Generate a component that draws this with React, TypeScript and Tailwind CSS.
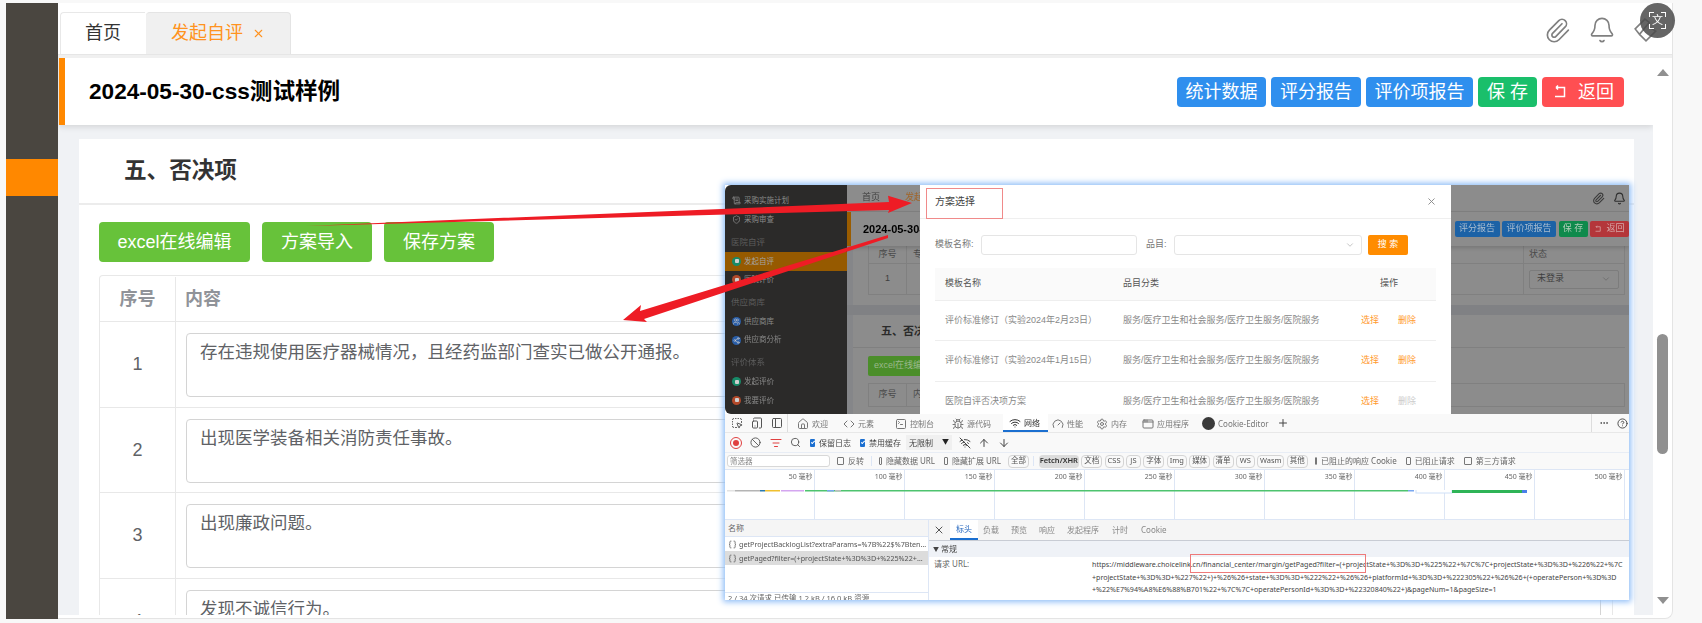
import {
  Bell, Paperclip, ChevronDown, X, Home, Code, Wifi, Gauge, Settings, Plus, AppWindow, Search, Ban, ListFilter,
  ArrowUp, ArrowDown, CircleHelp, Ellipsis, Bug, SquareTerminal, MousePointerSquareDashed, TabletSmartphone, PanelLeft,
  WifiOff, Braces, ScrollText, ShieldCheck, Users, Share2,
} from "lucide-react";

const FONT = "font-['Liberation_Sans','Noto_Sans_CJK_SC',sans-serif]";
const DEV_FONT = "font-['Noto_Sans','Noto_Sans_CJK_SC',sans-serif]";

const rows = [
  { n: 1, h: "h-[86px]", text: "存在违规使用医疗器械情况，且经药监部门查实已做公开通报。" },
  { n: 2, h: "h-[85px]", text: "出现医学装备相关消防责任事故。" },
  { n: 3, h: "h-[86px]", text: "出现廉政问题。" },
  { n: 4, h: "h-[86px]", text: "发现不诚信行为。" },
];

function TopBtn({ label, className }: { label: React.ReactNode; className: string }) {
  return (
    <button className={`h-[30px] rounded-[4px] text-white text-[18px] leading-[30px] flex items-center justify-center ${className}`}>
      {label}
    </button>
  );
}

function ReturnGlyph({ className }: { className: string }) {
  return (
    <svg viewBox="0 0 16 16" className={className} fill="none" stroke="currentColor" strokeWidth="1.5">
      <path d="M4 3.5h8.5v9H3M4 3.5l2-2M4 3.5l2 2" />
    </svg>
  );
}

function MiniNav({ icon, color, label, active }: { icon: React.ReactNode; color: string; label: string; active?: boolean }) {
  return (
    <div className={`flex items-center h-[18.6px] pl-[7px] gap-[3px] text-[7.5px] whitespace-nowrap ${active ? "bg-[#965a00] text-[#a5a5a5]" : "text-[#8a8a8a]"}`}>
      <span className={`w-[9px] h-[9px] rounded-full flex items-center justify-center ${color}`}>{icon}</span>
      {label}
    </div>
  );
}

function MiniHead({ label }: { label: string }) {
  return <div className="h-[23px] pl-[6px] pt-[3px] flex items-center text-[8.5px] text-[#5c5c5c]">{label}</div>;
}

function Sidebar() {
  const dot = <span className="w-[4px] h-[4px] bg-[#cfcfcf] rounded-[1px]" />;
  return (
    <div className={`w-[122px] h-full bg-[#2b2a29] rounded-l-[6px] pt-[6px] shrink-0 ${FONT}`}>
      <div className="flex items-center h-[19px] pl-[7px] gap-[3px] text-[7.5px] text-[#8a8a8a]">
        <ScrollText className="w-[9px] h-[9px]" />采购实施计划
      </div>
      <div className="flex items-center h-[19px] pl-[7px] gap-[3px] text-[7.5px] text-[#8a8a8a]">
        <ShieldCheck className="w-[9px] h-[9px]" />采购审查
      </div>
      <MiniHead label="医院自评" />
      <MiniNav icon={dot} color="bg-[#178a68]" label="发起自评" active />
      <MiniNav icon={dot} color="bg-[#b2492a]" label="医院评价" />
      <MiniHead label="供应商库" />
      <MiniNav icon={<Users className="w-[7px] h-[7px] text-[#cfcfcf]" />} color="bg-[#2a5ea8]" label="供应商库" />
      <MiniNav icon={<Share2 className="w-[7px] h-[7px] text-[#cfcfcf]" />} color="bg-[#2a5ea8]" label="供应商分析" />
      <MiniHead label="评价体系" />
      <MiniNav icon={dot} color="bg-[#178a68]" label="发起评价" />
      <MiniNav icon={dot} color="bg-[#b2492a]" label="我要评价" />
    </div>
  );
}

// page behind the dialog mask, dimmed
function DimmedPage() {
  return (
    <div className={`flex-1 h-full bg-[#8c8c8c] overflow-hidden text-[#3e3e3e] whitespace-nowrap ${FONT}`}>
      <div className="h-[27px] flex items-center border-b border-[#808080] pl-[15px] text-[9px] relative">
        <span>首页</span>
        <span className="ml-[25px] text-[#a0652a]">发起</span>
        <Paperclip className="absolute left-[745px] top-[7px] w-[13px] h-[13px] text-[#3a3a3a]" />
        <Bell className="absolute left-[766px] top-[7px] w-[13px] h-[13px] text-[#2e2e2e]" />
      </div>
      <div className="h-[34px] border-l-[4px] border-[#9a5c00] flex items-center justify-between pl-[12px] text-[11px] font-bold text-black shadow-[0_2px_4px_rgba(0,0,0,0.15)] relative">
        <span>2024-05-30-css测试样例</span>
        <div className="flex gap-[2.5px] text-[9px] font-normal text-[#a8bcd0]">
          <span className="w-[45px] h-[16px] rounded-[2px] bg-[#1c62a6] flex items-center justify-center">评分报告</span>
          <span className="w-[54px] h-[16px] rounded-[2px] bg-[#1c62a6] flex items-center justify-center">评价项报告</span>
          <span className="w-[29px] h-[16px] rounded-[2px] bg-[#0f8a4c] flex items-center justify-center text-[#b0ccb8]">保 存</span>
          <span className="w-[39px] h-[16px] rounded-[2px] bg-[#b4363a] flex items-center justify-center gap-[4px] text-[#d8a8a8]">
            <ReturnGlyph className="w-[8px] h-[8px]" />返回
          </span>
        </div>
      </div>
      <div className="h-[59px] bg-[#858689] pl-[6px]">
        <div className="h-full bg-[#8c8c8c] pl-[15px] pr-[4px]">
          <div className="h-[49px] border-x border-b border-[#808080] flex text-[9px]">
            <div className="w-[38px] border-r border-[#808080] flex flex-col">
              <div className="h-[18px] flex items-center justify-center border-b border-[#808080] text-[#4a4a4a]">序号</div>
              <div className="flex-1 flex items-center justify-center">1</div>
            </div>
            <div className="flex-1 flex flex-col">
              <div className="h-[18px] pl-[6px] flex items-center border-b border-[#808080] text-[#4a4a4a]">专</div>
            </div>
            <div className="w-[101px] border-l border-[#808080] flex flex-col">
              <div className="h-[18px] pl-[5px] flex items-center border-b border-[#808080] text-[#4a4a4a]">状态</div>
              <div className="flex-1 flex items-center pl-[5px]">
                <div className="w-[90px] h-[19px] border border-[#7c7c7c] rounded-[2px] flex items-center justify-between px-[7px] text-[#3e3e3e]">
                  未登录<ChevronDown className="w-[10px] h-[10px] text-[#6c6c6c]" />
                </div>
              </div>
            </div>
          </div>
        </div>
      </div>
      <div className="h-[10px] bg-[#808184]" />
      <div className="h-[99px] bg-[#858689] pl-[6px]">
        <div className="h-full bg-[#8c8c8c] pr-[4px]">
          <div className="h-[33px] border-b border-[#808080] pl-[28px] flex items-center text-[11px] font-bold text-[#2a2a2a]">五、否决项</div>
          <div className="pl-[15px] pt-[8px]">
            <div className="w-[90px] h-[20px] rounded-[2px] bg-[#4b8e2a] text-[#9ab88a] text-[9px] flex items-center pl-[6px]">excel在线编辑</div>
          </div>
          <div className="ml-[15px] mt-[7px] h-[24px] border border-[#808080] flex text-[9px] text-[#4a4a4a]">
            <div className="w-[38px] border-r border-[#808080] flex items-center justify-center">序号</div>
            <div className="pl-[6px] flex items-center">内容</div>
          </div>
        </div>
      </div>
    </div>
  );
}

function SchemeDialog() {
  const data = [
    { name: "评价标准修订（实验2024年2月23日）", h: "h-[40px]", off: false },
    { name: "评价标准修订（实验2024年1月15日）", h: "h-[41px]", off: false },
    { name: "医院自评否决项方案", h: "h-[41px]", off: true },
  ];
  return (
    <div className={`absolute left-[195px] top-0 w-[531px] h-[229px] bg-white overflow-hidden text-[9px] whitespace-nowrap ${FONT}`}>
      <div className="h-[34px] border-b border-[#efefef] flex items-center justify-between pl-[15px] pr-[14px]">
        <span className="text-[10px] text-[#444]">方案选择</span>
        <X className="w-[11px] h-[11px] text-[#888]" />
      </div>
      <div className="flex items-center h-[21px] mt-[15px] pl-[15px] text-[#777]">
        <span className="w-[46px]">模板名称:</span>
        <div className="w-[156px] h-[20px] border border-[#e5e5e5] rounded-[3px]" />
        <span className="ml-[9px] w-[28px]">品目:</span>
        <div className="w-[188px] h-[20px] border border-[#e5e5e5] rounded-[3px] flex items-center justify-end pr-[6px]">
          <ChevronDown className="w-[10px] h-[10px] text-[#bbb]" />
        </div>
        <div className="ml-[6px] w-[40px] h-[20px] bg-[#ff8c00] rounded-[2px] text-white flex items-center justify-center">搜 索</div>
      </div>
      <div className="ml-[15px] mr-[15px] mt-[13px]">
        <div className="h-[33px] bg-[#fafafa] border-b border-[#eee] flex items-center text-[#555]">
          <span className="w-[188px] pl-[10px]">模板名称</span>
          <span className="w-[238px]">品目分类</span>
          <span className="pl-[19px]">操作</span>
        </div>
        {data.map((d) => (
          <div key={d.name} className={`${d.h} border-b border-[#eee] flex items-center text-[#888]`}>
            <span className="w-[188px] pl-[10px]">{d.name}</span>
            <span className="w-[238px]">服务/医疗卫生和社会服务/医疗卫生服务/医院服务</span>
            <span className="w-[37px] text-[#ff9a2e]">选择</span>
            <span className={d.off ? "text-[#ccc]" : "text-[#ff9a2e]"}>删除</span>
          </div>
        ))}
      </div>
      <div className="absolute left-[6px] top-[3px] w-[77px] h-[31px] border border-[#f08a8a]" />
    </div>
  );
}

function DevTab({ icon, label, active, className }: { icon: React.ReactNode; label: string; active?: boolean; className: string }) {
  return (
    <div className={`h-full flex items-center gap-[3px] shrink-0 pt-[1px] ${active ? "border-b-[2px] border-[#1b6fd0] text-[#333] bg-white" : "text-[#777]"} ${className}`}>
      {icon}
      <span>{label}</span>
    </div>
  );
}

function Check({ on, label, className }: { on?: boolean; label: string; className: string }) {
  return (
    <div className={`flex items-center gap-[4px] shrink-0 ${className}`}>
      <span className={`w-[8px] h-[8px] rounded-[1px] flex items-center justify-center ${on ? "bg-[#1b6fd0]" : "border border-[#777]"}`}>
        {on && <span className="w-[4px] h-[2px] border-l border-b border-white -rotate-45 -mt-[1px]" />}
      </span>
      {label}
    </div>
  );
}

function Chip({ label, active, w }: { label: string; active?: boolean; w: string }) {
  return (
    <span className={`h-[13px] rounded-[4px] flex items-center justify-center text-[7.5px] shrink-0 ${w} ${active ? "bg-[#dcdcdc] text-[#333] font-semibold" : "border border-[#d4d4d4] text-[#555]"}`}>
      {label}
    </span>
  );
}

function DevTools() {
  const ic = "w-[12px] h-[12px]";
  const marks = [50, 100, 150, 200, 250, 300, 350, 400, 450, 500];
  return (
    <div className={`absolute left-0 top-[229px] w-[904px] h-[186px] bg-white overflow-hidden text-[8px] whitespace-nowrap text-[#666] ${DEV_FONT}`}>
      {/* tabs */}
      <div className="h-[19px] bg-[#f9f9f9] border-b border-[#e8e8e8] flex items-center relative">
        <div className="flex items-center gap-[8px] pl-[6px] w-[62px] text-[#555] shrink-0">
          <MousePointerSquareDashed className={ic} />
          <TabletSmartphone className={ic} />
          <PanelLeft className={ic} />
        </div>
        <div className="w-px h-full bg-[#ddd]" />
        <DevTab icon={<Home className={ic} />} label="欢迎" className="ml-[9px] w-[42px]" />
        <DevTab icon={<Code className={ic} />} label="元素" className="ml-[4px] w-[46px]" />
        <DevTab icon={<SquareTerminal className={ic} />} label="控制台" className="ml-[6px] w-[55px]" />
        <DevTab icon={<Bug className={ic} />} label="源代码" className="ml-[2px] w-[51px]" />
        <DevTab icon={<Wifi className={ic} />} label="网络" active className="w-[45px] pl-[6px]" />
        <DevTab icon={<Gauge className={ic} />} label="性能" className="ml-[4px] w-[41px]" />
        <DevTab icon={<Settings className={ic} />} label="内存" className="ml-[3px] w-[46px]" />
        <DevTab icon={<AppWindow className={ic} />} label="应用程序" className="w-[58px]" />
        <DevTab icon={<span className="w-[13px] h-[13px] rounded-full bg-[#3a3a3a]" />} label="Cookie-Editor" className="ml-[2px] w-[75px]" />
        <Plus className={`${ic} text-[#444]`} />
        <div className="absolute right-0 top-0 h-full w-[38px] border-l border-[#ddd] flex items-center gap-[8px] pl-[7px] text-[#444]">
          <Ellipsis className="w-[10px] h-[10px]" />
          <CircleHelp className="w-[11px] h-[11px]" />
        </div>
      </div>
      {/* toolbar */}
      <div className="h-[20px] bg-[#f9f9f9] border-b border-[#e8edf5] flex items-center pl-[5px] text-[#444]">
        <span className="w-[12px] h-[12px] rounded-full border border-[#e04040] flex items-center justify-center shrink-0">
          <span className="w-[6px] h-[6px] rounded-full bg-[#e04040]" />
        </span>
        <Ban className="ml-[8px] w-[11px] h-[11px] text-[#555]" />
        <ListFilter className="ml-[9px] w-[12px] h-[12px] text-[#e04040]" />
        <Search className="ml-[8px] w-[11px] h-[11px] text-[#555]" />
        <Check on label="保留日志" className="ml-[9px] w-[41px]" />
        <Check on label="禁用缓存" className="ml-[9px] w-[41px]" />
        <span className="ml-[5px] w-[46px] h-[15px] bg-[#f0f0f0] flex items-center justify-between px-[3px]">
          无限制<span className="text-[7px] text-[#222]">▼</span>
        </span>
        <WifiOff className="ml-[7px] w-[12px] h-[12px]" />
        <ArrowUp className="ml-[7px] w-[12px] h-[12px]" />
        <ArrowDown className="ml-[8px] w-[12px] h-[12px]" />
      </div>
      {/* filter row */}
      <div className="h-[17px] bg-[#f9f9f9] border-b border-[#dde6f5] flex items-center pl-[2px]">
        <span className="w-[103px] h-[12px] bg-white border border-[#d8d8d8] rounded-[3px] pl-[2px] text-[7.5px] leading-[10px] text-[#888] shrink-0">筛选器</span>
        <Check label="反转" className="ml-[7px] w-[27px]" />
        <span className="w-px h-[10px] bg-[#dde6f5] ml-[7px]" />
        <Check label="隐藏数据 URL" className="ml-[7px] w-[56px]" />
        <Check label="隐藏扩展 URL" className="ml-[9px] w-[57px]" />
        <span className="ml-[7px] flex items-center gap-[2.4px]">
          <Chip label="全部" w="w-[21px]" />
          <span className="w-px h-[10px] bg-[#dde6f5] mx-[2px]" />
          <Chip label="Fetch/XHR" active w="w-[40px]" />
          <Chip label="文档" w="w-[21px]" />
          <Chip label="CSS" w="w-[19px]" />
          <Chip label="JS" w="w-[15px]" />
          <Chip label="字体" w="w-[21px]" />
          <Chip label="Img" w="w-[20px]" />
          <Chip label="媒体" w="w-[21px]" />
          <Chip label="清单" w="w-[21px]" />
          <Chip label="WS" w="w-[19px]" />
          <Chip label="Wasm" w="w-[27px]" />
          <Chip label="其他" w="w-[21px]" />
        </span>
        <Check label="已阻止的响应 Cookie" className="ml-[7px] w-[82px]" />
        <Check label="已阻止请求" className="ml-[9px] w-[49px]" />
        <Check label="第三方请求" className="ml-[9px]" />
      </div>
      {/* overview */}
      <div className="h-[50px] border-b border-[#dde6f5] flex relative">
        {marks.map((m, i) => (
          <div key={m} className={`h-full border-r border-[#dde6f5] text-right pr-[1px] text-[7px] text-[#666] shrink-0 leading-[14px] ${i === 0 ? "w-[89.5px]" : "w-[90px]"}`}>
            {m} 毫秒
          </div>
        ))}
        <svg className="absolute left-0 top-[20px]" width="904" height="4">
          <rect x="2" y="0" width="8" height="1.5" fill="#e2e2e2" />
          <rect x="10" y="0" width="25" height="1.5" fill="#b4b4b4" />
          <rect x="35" y="0" width="5" height="1.5" fill="#2a7ab0" />
          <rect x="40" y="0" width="15" height="1.5" fill="#f0c030" />
          <rect x="56" y="0" width="23" height="1.5" fill="#d4a6f0" />
          <rect x="80" y="0" width="603" height="1.5" fill="#4ec36f" />
          <rect x="102" y="0" width="7" height="1.5" fill="#7aa8f0" />
          <rect x="110" y="0" width="6" height="1.5" fill="#bdbdbd" />
          <rect x="683" y="0" width="6" height="1.5" fill="#7aa8f0" />
          <rect x="691" y="-1" width="36" height="4" fill="#fff" stroke="#cfe0f8" />
          <rect x="727" y="0" width="75" height="3" fill="#2fb457" />
          <rect x="797" y="0" width="5" height="3" fill="#4a80e8" />
        </svg>
      </div>
      {/* bottom */}
      <div className="flex h-[80px]">
        <div className="w-[204px] border-r border-[#dde6f5] shrink-0 relative">
          <div className="h-[17px] bg-[#f5f5f5] border-b border-[#dde6f5] pl-[3px] flex items-center">名称</div>
          <div className="h-[14px] flex items-center pl-[3px] gap-[2px] text-[#555] text-[7.2px] overflow-hidden">
            <Braces className="w-[9px] h-[9px] shrink-0" />getProjectBacklogList?extraParams=%7B%22$%7Bten…
          </div>
          <div className="h-[14px] bg-[#dcdcdc] flex items-center pl-[3px] gap-[2px] text-[#555] text-[7.2px] overflow-hidden">
            <Braces className="w-[9px] h-[9px] shrink-0" />getPaged?filter=(+projectState+%3D%3D+%225%22+…
          </div>
          <div className="absolute left-0 top-[72px] w-full border-t border-[#dde6f5] pl-[3px] text-[7.5px] leading-[10px]">2 / 34 次请求 已传输 1.2 kB / 16.0 kB 资源</div>
        </div>
        <div className="flex-1 min-w-0">
          <div className="h-[21px] bg-[#f5f5f5] border-b border-[#c8ccd4] flex items-center text-[#888]">
            <X className="ml-[4px] w-[12px] h-[12px] text-[#555] shrink-0" />
            <span className="ml-[5px] w-[28px] h-full bg-white border-b-[2px] border-[#1b6fd0] text-[#2a6ac0] flex items-center justify-center shrink-0">标头</span>
            <span className="ml-[5px]">负载</span>
            <span className="ml-[12px]">预览</span>
            <span className="ml-[12px]">响应</span>
            <span className="ml-[12px]">发起程序</span>
            <span className="ml-[13px]">计时</span>
            <span className="ml-[13px]">Cookie</span>
          </div>
          <div className="h-[16px] bg-[#eff2f7] pl-[4px] flex items-center text-[#444]">
            <span className="text-[6px] mr-[2px]">▼</span>常规
          </div>
          <div className="flex pl-[5px] bg-white relative">
            <span className="w-[158px] shrink-0 leading-[12.5px] pt-[1px]">请求 URL:</span>
            <div className="flex-1 min-w-0 overflow-hidden leading-[12.5px] pt-[1px] text-[#444] text-[7.1px]">
              <div>https://middleware.choicelink.cn/financial_center/margin/getPaged?filter=(+projectState+%3D%3D+%225%22+%7C%7C+projectState+%3D%3D+%226%22+%7C</div>
              <div>+projectState+%3D%3D+%227%22+)+%26%26+state+%3D%3D+%222%22+%26%26+platformId+%3D%3D+%222305%22+%26%26+(+operatePerson+%3D%3D</div>
              <div>+%22%E7%94%A8%E6%88%B701%22+%7C%7C+operatePersonId+%3D%3D+%22320840%22+)&amp;pageNum=1&amp;pageSize=1</div>
            </div>
          </div>
        </div>
      </div>
      <div className="absolute left-[465px] top-[140px] w-[176px] h-[19px] border border-[#ee7a7a]" />
    </div>
  );
}

function PastedShot() {
  return (
    <div className="absolute left-[725px] top-[185px] w-[904px] h-[415px] bg-white shadow-[0_0_6px_2px_#8fbdf7] blur-[0.3px]">
      <div className="h-[229px] flex">
        <Sidebar />
        <DimmedPage />
      </div>
      <SchemeDialog />
      <DevTools />
    </div>
  );
}

export default function App() {
  return (
    <div className={`relative w-[1702px] h-[623px] overflow-hidden bg-[#f8f8f8] pl-[6px] pt-[3px] flex ${FONT}`}>
      {/* sidebar */}
      <div className="w-[52px] h-[616px] bg-[#4a4640] pt-[156px] shrink-0">
        <div className="h-[37px] bg-[#ff8800]" />
      </div>

      <div className="w-[1615px] h-[616px] bg-white rounded-br-[8px] flex flex-col border-r border-b border-[#e4e4e4] overflow-hidden pb-[3px]">
        {/* tab row */}
        <div className="h-[52px] shrink-0 flex items-end pl-[2px] border-b border-[#e6e6e6] relative">
          <div className="h-[42px] w-[85px] border-l border-t border-[#e8e8e8] rounded-tl-[4px] flex items-center justify-center text-[18px] text-[#333]">首页</div>
          <div className="h-[42px] w-[145px] ml-[1px] bg-[#f0f0f0] border-t border-r border-[#e4e4e4] rounded-t-[4px] flex items-center justify-center gap-[9px] text-[18px] text-[#ff9320]">
            发起自评<X className="w-[13px] h-[13px]" />
          </div>
          <div className="absolute right-[13px] top-[13px] flex items-center gap-[17px] text-[#808080]">
            <Paperclip className="w-[27px] h-[27px]" strokeWidth={1.5} />
            <Bell className="w-[28px] h-[28px]" strokeWidth={1.4} />
            <svg viewBox="0 0 24 24" className="w-[26px] h-[26px]" fill="none" stroke="currentColor" strokeWidth="1.5">
              <path d="M2 11 11 2l4 3-9 11zM6 16l6 6 9-9-5-3" />
            </svg>
          </div>
        </div>

        <div className="h-[3px] shrink-0 bg-[#f0f0f0]" />

        <div className="flex flex-1 min-h-0">
          <div className="w-[1595px] shrink-0 min-h-0 flex flex-col overflow-hidden bg-[#f0f2f5]">
            {/* title bar */}
            <div className="h-[67px] shrink-0 ml-[1px] bg-white border-l-[6px] border-[#ff8800] flex items-center justify-between pl-[24px] pr-[29px] shadow-[0_2px_6px_rgba(0,0,0,0.12)] relative">
              <h1 className="text-[22.6px] font-bold text-black">2024-05-30-css测试样例</h1>
              <div className="flex gap-[5px]">
                <TopBtn label="统计数据" className="w-[89px] bg-[#2f8fee]" />
                <TopBtn label="评分报告" className="w-[90px] bg-[#2f8fee]" />
                <TopBtn label="评价项报告" className="w-[107px] bg-[#2f8fee]" />
                <TopBtn label="保 存" className="w-[59px] bg-[#1abf6b]" />
                <TopBtn
                  label={<span className="flex items-center gap-[10px]"><ReturnGlyph className="w-[16px] h-[16px]" />返回</span>}
                  className="w-[82px] bg-[#ff4f52]"
                />
              </div>
            </div>

            {/* card */}
            <div className="ml-[21px] w-[1555px] mt-[14px] bg-white flex-1 min-h-0 overflow-hidden">
              <div className="h-[66px] border-b-2 border-[#ececec] pl-[45px] flex items-center text-[22.6px] font-bold text-[#333]">五、否决项</div>
              <div className="flex gap-[12px] pl-[20px] pt-[17px]">
                <button className="w-[151px] h-[40px] rounded-[4px] bg-[#67c23a] text-white text-[18px]">excel在线编辑</button>
                <button className="w-[110px] h-[40px] rounded-[4px] bg-[#67c23a] text-white text-[18px]">方案导入</button>
                <button className="w-[110px] h-[40px] rounded-[4px] bg-[#67c23a] text-white text-[18px]">保存方案</button>
              </div>
              <div className="ml-[20px] mr-[21px] mt-[13px] border-l border-r border-t border-[#e8e8e8] rounded-t-[4px]">
                <div className="h-[46px] flex border-b border-[#e8e8e8] pt-[1px] text-[18px] font-bold text-[#909399]">
                  <div className="w-[76px] border-r border-[#e8e8e8] flex items-center justify-center">序号</div>
                  <div className="pl-[9px] flex items-center">内容</div>
                </div>
                {rows.map((r) => (
                  <div key={r.n} className={`${r.h} flex border-b border-[#e8e8e8]`}>
                    <div className="w-[76px] border-r border-[#e8e8e8] flex items-center justify-center text-[18px] text-[#606266]">{r.n}</div>
                    <div className="flex-1 pl-[10px] pr-[11px] pt-[11px]">
                      <div className="h-[64px] border border-[#d4d4d4] rounded-[4px] pl-[13px] pt-[5px] text-[17.5px] text-[#606266]">{r.text}</div>
                    </div>
                  </div>
                ))}
              </div>
            </div>
          </div>

          {/* scrollbar */}
          <div className="flex-1 flex flex-col items-center justify-between relative py-[11px]">
            <span className="w-0 h-0 border-x-[6px] border-x-transparent border-b-[7px] border-b-[#909090]" />
            <span className="absolute top-[276px] w-[11px] h-[120px] rounded-[6px] bg-[#909090]" />
            <span className="w-0 h-0 border-x-[6px] border-x-transparent border-t-[7px] border-t-[#909090]" />
          </div>
        </div>
      </div>

      <PastedShot />

      {/* red annotation arrows */}
      <svg className="absolute left-0 top-0 pointer-events-none" width="1702" height="623">
        <polygon points="306,226 889,202 888,195.7 912,203 888,213 889,210" fill="#ee1c25" />
        <polygon points="888,235 640,311 641,305 623,320 647,322 644,319 888,238" fill="#ee1c25" />
      </svg>

      {/* translate badge */}
      <div className="absolute left-[1640px] top-[3px] w-[35px] h-[35px] rounded-full bg-[#4a4a4a]/85 flex items-center justify-center">
        <div className="relative w-[17px] h-[17px] flex items-center justify-center text-[11px] text-white">
          文
          <span className="absolute left-0 top-0 w-[5px] h-[5px] border-l border-t border-white" />
          <span className="absolute right-0 top-0 w-[5px] h-[5px] border-r border-t border-white" />
          <span className="absolute left-0 bottom-0 w-[5px] h-[5px] border-l border-b border-white" />
          <span className="absolute right-0 bottom-0 w-[5px] h-[5px] border-r border-b border-white" />
        </div>
      </div>
    </div>
  );
}
